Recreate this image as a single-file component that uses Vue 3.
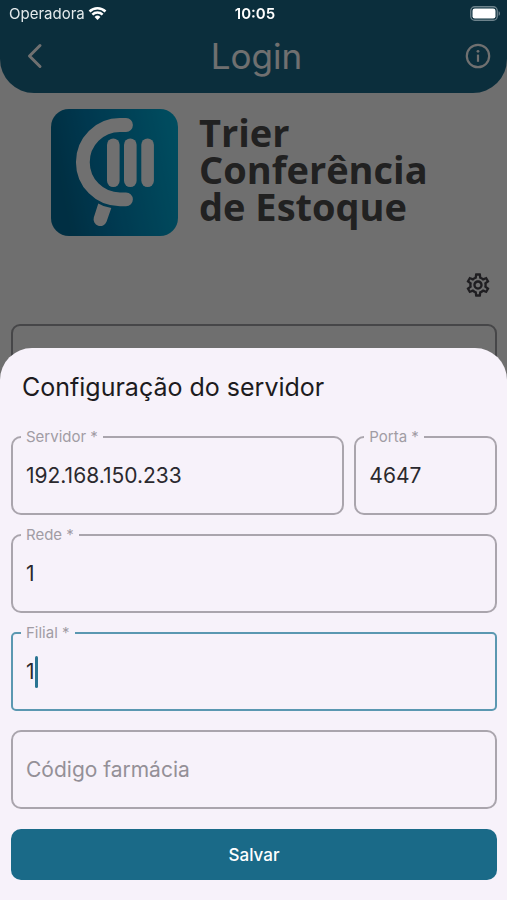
<template>
  <div class="screen">
    <div class="status-bar">
      <span class="carrier">
        Operadora
        <svg class="wifi" viewBox="0 0 20 15" aria-hidden="true">
          <path d="M1.6 5.4a12 12 0 0 1 16.8 0M4.6 8.6a7.7 7.7 0 0 1 10.8 0" fill="none" stroke="#fff" stroke-width="2.6" />
          <path d="M10 14.4 6.9 11.2a4.4 4.4 0 0 1 6.2 0z" fill="#fff" />
        </svg>
      </span>
      <span class="clock">10:05</span>
      <svg class="battery" viewBox="0 0 31 15" aria-hidden="true">
        <rect x="0.75" y="0.75" width="26.5" height="13.5" rx="4" fill="none" stroke="#6d838c" stroke-width="1.3" />
        <rect x="2.5" y="2.5" width="23" height="10" rx="2.3" fill="#fff" />
        <path d="M28.6 5.2c1.9.7 1.9 3.9 0 4.6z" fill="#6d838c" />
      </svg>
    </div>

    <header class="app-bar">
      <button type="button" class="icon-btn" aria-label="Voltar">
        <svg width="26" height="26" viewBox="0 0 26 26" fill="none" stroke="currentColor" stroke-width="3" stroke-linecap="round" stroke-linejoin="round">
          <path d="M18 2.500 7.500 13 18 23.500" />
        </svg>
      </button>
      <h1>Login</h1>
      <button type="button" class="icon-btn" aria-label="Informações">
        <svg width="26" height="26" viewBox="0 0 26 26">
          <circle cx="13" cy="13" r="11.2" fill="none" stroke="currentColor" stroke-width="2.2" />
          <path d="M13 11.6v7.2" stroke="currentColor" stroke-width="2.2" />
          <circle cx="13" cy="8.3" r="1.4" fill="currentColor" />
        </svg>
      </button>
    </header>

    <main class="login">
      <div class="brand">
        <svg class="logo" viewBox="0 0 127 127" aria-hidden="true">
          <defs>
            <linearGradient id="logo-bg" x1="0" y1="0.2" x2="1" y2="0">
              <stop offset="0" stop-color="#006c98" />
              <stop offset="0.3" stop-color="#0080b4" />
              <stop offset="1" stop-color="#00b2dc" />
            </linearGradient>
          </defs>
          <rect width="127" height="127" rx="18" fill="url(#logo-bg)" />
          <path d="M75 16h-6a37 37 0 0 0 0 74.300h6" fill="none" stroke="#fff" stroke-width="13.800" stroke-linecap="round" />
          <g fill="#fff">
            <rect x="56" y="29.500" width="12.600" height="48.600" rx="6.300" />
            <rect x="73" y="29.500" width="12.600" height="48.600" rx="6.300" />
            <rect x="90.300" y="29.500" width="12.600" height="48.600" rx="6.300" />
            <path d="M47.300 94.500q5.700 3.700 13 4.500l-4.800 13.800a6.700 6.700 0 0 1-12.700-4.200z" />
          </g>
        </svg>
        <p class="brand-name">Trier<br>Conferência<br>de Estoque</p>
      </div>
      <button type="button" class="icon-btn settings" aria-label="Configurações">
        <svg width="28" height="28" viewBox="0 0 24 24" fill="currentColor">
          <path d="M19.430 12.980c.04-.32.07-.64.07-.98s-.03-.66-.07-.98l2.110-1.650c.19-.15.24-.42.12-.64l-2-3.460c-.09-.16-.26-.25-.44-.25-.06 0-.12.01-.17.03l-2.490 1c-.52-.4-1.080-.73-1.690-.98l-.38-2.650C14.460 2.180 14.250 2 14 2h-4c-.25 0-.46.18-.49.42l-.38 2.650c-.61.25-1.170.59-1.690.98l-2.490-1c-.06-.02-.12-.03-.18-.03-.17 0-.34.09-.43.25l-2 3.460c-.13.22-.07.49.12.64l2.110 1.650c-.04.32-.07.65-.07.98s.03.66.07.98l-2.110 1.650c-.19.15-.24.42-.12.64l2 3.460c.09.16.26.25.44.25.06 0 .12-.01.17-.03l2.490-1c.52.4 1.080.73 1.690.98l.38 2.650c.03.24.24.42.49.42h4c.25 0 .46-.18.49-.42l.38-2.650c.61-.25 1.170-.59 1.690-.98l2.490 1c.06.02.12.03.18.03.17 0 .34-.09.43-.25l2-3.460c.12-.22.07-.49-.12-.64l-2.110-1.650zm-1.980-1.710c.04.31.05.52.05.73s-.02.43-.05.73l-.14 1.130.89.7 1.080.84-.7 1.210-1.270-.51-1.040-.42-.9.68c-.43.32-.84.56-1.250.73l-1.060.43-.16 1.130-.2 1.350h-1.400l-.19-1.350-.16-1.130-1.060-.43c-.43-.18-.83-.41-1.230-.71l-.91-.7-1.060.43-1.270.51-.7-1.210 1.080-.84.89-.7-.14-1.130c-.03-.31-.05-.54-.05-.74s.02-.43.05-.73l.14-1.130-.89-.7-1.080-.84.7-1.210 1.270.51 1.040.42.9-.68c.43-.32.84-.56 1.250-.73l1.060-.43.16-1.130.2-1.350h1.390l.19 1.350.16 1.130 1.060.43c.43.18.83.41 1.230.71l.91.7 1.060-.43 1.270-.51.7 1.210-1.070.85-.89.7.14 1.130zM12 8c-2.210 0-4 1.790-4 4s1.790 4 4 4 4-1.790 4-4-1.790-4-4-4zm0 6c-1.100 0-2-.9-2-2s.9-2 2-2 2 .9 2 2-.9 2-2 2z" />
        </svg>
      </button>
      <input class="user-input" type="text" aria-label="Usuário">
    </main>

    <div class="backdrop"></div>

    <form class="sheet" @submit.prevent>
      <h2>Configuração do servidor</h2>
      <div class="fields">
        <fieldset
          v-for="field in fields"
          :key="field.id"
          class="field"
          :class="[field.size, { active: field.id === activeId, labeled: field.value }]"
        >
          <legend v-if="field.value"><label :for="field.id">{{ field.label }}</label></legend>
          <div class="entry">
            <input :id="field.id" v-model="field.value" type="text" autocomplete="off" @focus="activeId = field.id">
            <label v-if="!field.value" class="hint" :for="field.id">{{ field.label }}</label>
            <span v-if="field.id === activeId" class="mirror" aria-hidden="true"><span class="typed">{{ field.value }}</span><span class="caret"></span></span>
          </div>
        </fieldset>
      </div>
      <button type="submit" class="save">Salvar</button>
    </form>
  </div>
</template>

<script setup>
import { ref } from 'vue';

const activeId = ref('filial');
const fields = ref([
  { id: 'servidor', label: 'Servidor *', value: '192.168.150.233', size: 'wide' },
  { id: 'porta', label: 'Porta *', value: '4647', size: 'narrow' },
  { id: 'rede', label: 'Rede *', value: '1', size: 'full' },
  { id: 'filial', label: 'Filial *', value: '1', size: 'full' },
  { id: 'codigo', label: 'Código farmácia', value: '', size: 'full' },
]);
</script>

<style>
body {
  margin: 0;
  background: #fcfcfc;
}
</style>

<style scoped>
.screen {
  position: relative;
  min-height: 100vh;
  overflow: hidden;
  font-family: Inter, 'Liberation Sans', sans-serif;
  color: #1d1b20;
}
.screen * {
  box-sizing: border-box;
}
button,
input {
  font-family: inherit;
}
.status-bar {
  position: absolute;
  inset: 0 0 auto;
  z-index: 3;
  display: grid;
  grid-template-columns: 1fr auto 1fr;
  align-items: center;
  height: 27px;
  padding: 0 6px 0 9px;
  color: #fff;
  font-size: 15px;
}
.carrier {
  display: flex;
  align-items: center;
  gap: 3px;
  color: #e4eaec;
}
.wifi {
  width: 19px;
  height: 15px;
}
.clock {
  font-weight: 600;
}
.battery {
  width: 31px;
  height: 15px;
  justify-self: end;
}
.app-bar {
  display: flex;
  align-items: center;
  justify-content: space-between;
  padding: 36px 16px 17px 22px;
  border-radius: 0 0 34px 34px;
  background: #1a6a8a;
  color: #fff;
}
.app-bar h1 {
  margin: 0;
  font-size: 35px;
  line-height: 40px;
  font-weight: 400;
}
.icon-btn {
  display: flex;
  padding: 0;
  border: 0;
  background: none;
  color: inherit;
}
.login {
  display: flex;
  flex-direction: column;
  padding: 16px 10px 0 11px;
}
.brand {
  display: flex;
  gap: 21px;
  padding-left: 40px;
}
.logo {
  flex: none;
  width: 127px;
  height: 127px;
}
.brand-name {
  margin: 5px 0 0;
  font-family: 'Open Sans', 'Noto Sans', sans-serif;
  font-size: 38px;
  line-height: 37px;
  font-weight: 700;
  color: #4b4b4d;
}
.settings {
  align-self: flex-end;
  margin: 35px 5px 25px;
  color: #47454c;
}
.user-input {
  height: 78px;
  border: 2px solid #a0a0a4;
  border-radius: 9px;
  background: none;
}
.backdrop {
  position: fixed;
  inset: 0;
  z-index: 2;
  background: rgba(0, 0, 0, 0.56);
}
.sheet {
  position: fixed;
  inset: auto 0 0;
  z-index: 4;
  padding: 23px 10px 20px 11px;
  border-radius: 32px 32px 0 0;
  background: #f7f2fa;
}
.sheet h2 {
  margin: 0 0 26px;
  padding-left: 11px;
  font-size: 25px;
  line-height: 32px;
  font-weight: 400;
}
.fields {
  display: flex;
  flex-wrap: wrap;
  gap: 12px 10px;
}
.field {
  min-width: 0;
  margin: 7px 0 0;
  padding: 0;
  border: 2px solid #aaa5ad;
  border-radius: 10px;
}
.field.labeled {
  margin-top: 0;
}
.wide {
  flex: 19 1 0;
}
.narrow {
  flex: 8 1 0;
}
.full {
  flex: 1 0 100%;
}
.field.active {
  border-color: #5b98b1;
  border-radius: 5px;
}
.field legend {
  margin-left: 8px;
  padding: 0 5px;
  font-size: 15px;
  line-height: 16px;
  color: #a19ca4;
}
.entry {
  display: grid;
  height: 75px;
}
.labeled .entry {
  height: 68px;
  padding-bottom: 7px;
}
.entry > * {
  grid-area: 1 / 1;
  min-width: 0;
  padding: 0 13px;
  font-size: 21px;
}
.entry input {
  border: 0;
  outline: 0;
  background: none;
  color: #2b292e;
  caret-color: transparent;
}
.hint {
  align-self: center;
  color: #949097;
  pointer-events: none;
}
.mirror {
  display: flex;
  align-items: center;
  pointer-events: none;
}
.typed {
  visibility: hidden;
}
.caret {
  width: 3px;
  height: 32px;
  border-radius: 2px;
  background: #2a7592;
}
.save {
  display: block;
  width: 100%;
  height: 51px;
  margin-top: 20px;
  padding: 0;
  border: 0;
  border-radius: 10px;
  background: #1a6a88;
  color: #fff;
  font-size: 17px;
  font-weight: 500;
}
</style>
